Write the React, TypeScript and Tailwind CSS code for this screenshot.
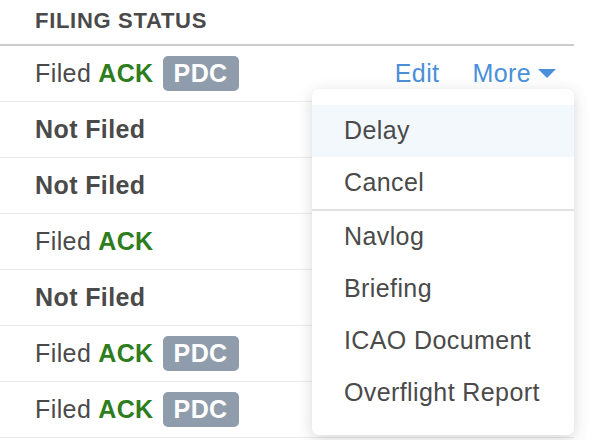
import React from "react";

const Badge = () => (
  <span className="ml-[9px] inline-flex h-[35px] items-center rounded-[5px] bg-[#8f9cab] px-[11px] font-bold text-white">
    PDC
  </span>
);

type Row = { kind: "filed" | "not"; pdc?: boolean; actions?: boolean };

const rows: Row[] = [
  { kind: "filed", pdc: true, actions: true },
  { kind: "not" },
  { kind: "not" },
  { kind: "filed" },
  { kind: "not" },
  { kind: "filed", pdc: true },
  { kind: "filed", pdc: true },
];

export default function App() {
  return (
    <div
      className="relative h-[440px] w-[600px] overflow-hidden bg-white text-[#4a4a4a]"
      style={{ fontFamily: '"Liberation Sans", Arial, sans-serif' }}
    >
      <div className="w-[574px]">
        <div className="flex h-[46px] items-center border-b-2 border-[#cccccc] pb-[4px] pl-[35px] text-[22px] font-bold tracking-[0.7px]">
          FILING STATUS
        </div>
        {rows.map((r, i) => (
          <div
            key={i}
            className="flex h-[56px] items-center border-b border-[#ebebeb] pl-[35px] pr-[18px] text-[25px] tracking-[0.4px]"
          >
            {r.kind === "not" ? (
              <span className="font-bold">Not Filed</span>
            ) : (
              <span className="flex items-center">
                <span>Filed</span>
                <span className="ml-[7px] font-bold text-[#2e7d1e]">ACK</span>
                {r.pdc && <Badge />}
              </span>
            )}
            {r.actions && (
              <div className="ml-auto flex items-center text-[#4a90d9]">
                <span>Edit</span>
                <span className="ml-[33px]">More</span>
                <svg className="ml-[7px]" width="18" height="10" viewBox="0 0 18 10">
                  <path d="M0 0 L18 0 L9 9 Z" fill="#4a90d9" />
                </svg>
              </div>
            )}
          </div>
        ))}
      </div>

      <div className="absolute left-[312px] top-[89px] w-[262px] rounded-[7px] bg-white py-[16px] text-[25px] tracking-[0.4px] shadow-[0_4px_16px_rgba(0,0,0,0.16)]">
        <div className="flex h-[52px] items-center bg-[#f3f8fd] pl-[32px]">Delay</div>
        <div className="flex h-[52px] items-center pl-[32px]">Cancel</div>
        <div className="h-[2px] bg-[#e2e2e2]" />
        <div className="flex h-[52px] items-center pl-[32px]">Navlog</div>
        <div className="flex h-[52px] items-center pl-[32px]">Briefing</div>
        <div className="flex h-[52px] items-center pl-[32px]">ICAO Document</div>
        <div className="flex h-[52px] items-center pl-[32px]">Overflight Report</div>
      </div>
    </div>
  );
}
